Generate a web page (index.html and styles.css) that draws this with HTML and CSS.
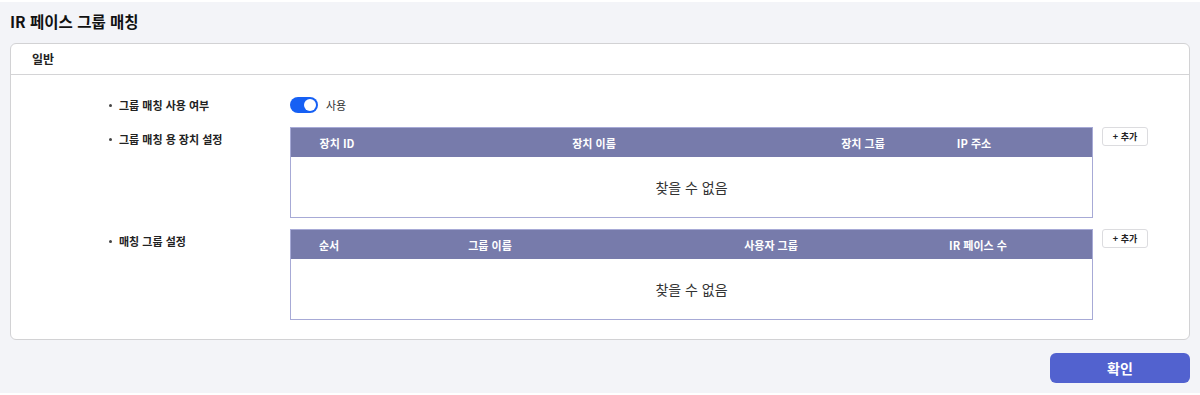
FILE: index.html
```html
<!DOCTYPE html>
<html lang="ko">
<head>
<meta charset="utf-8">
<title>IR 페이스 그룹 매칭</title>
<link rel="stylesheet" href="styles.css">
</head>
<body>
<div class="page">
  <h1 class="title">IR 페이스 그룹 매칭</h1>
  <section class="card">
    <div class="card-head">일반</div>
    <div class="card-body">
      <div class="row row-toggle">
        <div class="label"><span class="dot"></span>그룹 매칭 사용 여부</div>
        <div class="content toggle-wrap">
          <span class="toggle"><span class="knob"></span></span>
          <span class="toggle-text">사용</span>
        </div>
      </div>
      <div class="row">
        <div class="label"><span class="dot"></span>그룹 매칭 용 장치 설정</div>
        <div class="table">
          <div class="thead cols-device">
            <span>장치 ID</span><span>장치 이름</span><span>장치 그룹</span><span>IP 주소</span><span></span>
          </div>
          <div class="tbody">찾을 수 없음</div>
        </div>
        <button class="add-btn">+ 추가</button>
      </div>
      <div class="row">
        <div class="label"><span class="dot"></span>매칭 그룹 설정</div>
        <div class="table">
          <div class="thead cols-group">
            <span>순서</span><span>그룹 이름</span><span>사용자 그룹</span><span>IR 페이스 수</span><span></span>
          </div>
          <div class="tbody">찾을 수 없음</div>
        </div>
        <button class="add-btn">+ 추가</button>
      </div>
    </div>
  </section>
  <div class="footer">
    <button class="confirm">확인</button>
  </div>
</div>
</body>
</html>
```

FILE: styles.css
```css
* { box-sizing: border-box; }
html, body {
  margin: 0;
  padding: 0;
  background: #ffffff;
  font-family: "Noto Sans CJK KR", "Noto Sans", sans-serif;
  color: #222;
}
.page {
  margin-top: 2px;
  height: 391px;
  background: #f3f4f8;
  padding: 0 10px;
}
.title {
  margin: 0;
  padding: 9px 0 12px;
  font-size: 15.5px;
  line-height: 20px;
  font-weight: 700;
  color: #111;
}
.card {
  background: #fff;
  border: 1px solid #d2d2d4;
  border-radius: 6px;
  height: 297px;
}
.card-head {
  height: 31px;
  border-bottom: 1px solid #d4d4d6;
  padding-left: 21px;
  font-size: 12px;
  font-weight: 700;
  line-height: 30px;
  color: #222;
}
.card-body {
  padding: 22px 0 0 97px;
  display: flex;
  flex-direction: column;
  gap: 11px;
}
.row {
  display: grid;
  grid-template-columns: 182px 803px 55px;
  align-items: start;
}
.row-toggle {
  margin-bottom: 3px;
}
.label {
  display: flex;
  align-items: center;
  font-size: 11px;
  font-weight: 700;
  line-height: 16px;
  color: #222;
  margin-top: 4px;
}
.row-toggle .label { margin-top: 0; }
.dot {
  width: 3px;
  height: 3px;
  border-radius: 50%;
  background: #444;
  margin: 0 7px 0 1px;
}
.toggle-wrap {
  display: flex;
  align-items: center;
  height: 16px;
}
.toggle {
  width: 28px;
  height: 16px;
  border-radius: 8px;
  background: #1660f4;
  display: flex;
  align-items: center;
  justify-content: flex-end;
  padding: 0 2px;
}
.knob {
  width: 12px;
  height: 12px;
  border-radius: 50%;
  background: #fff;
}
.toggle-text {
  margin-left: 8px;
  font-size: 11px;
  color: #333;
}
.table {
  border: 1px solid #a7aad6;
}
.thead {
  display: grid;
  height: 29px;
  background: #777bab;
  color: #fff;
  font-size: 11px;
  font-weight: 700;
  align-items: center;
  text-align: center;
}
.cols-device { grid-template-columns: 92px 422px 116px 106px 1fr; }
.cols-group { grid-template-columns: 76px 246px 316px 98px 1fr; }
.tbody {
  height: 60px;
  display: flex;
  align-items: center;
  justify-content: center;
  font-size: 14px;
  color: #333;
}
.add-btn {
  margin-left: 9px;
  height: 19px;
  width: 46px;
  padding: 0;
  border: 1px solid #dcdcdf;
  border-radius: 3px;
  background: #fff;
  font-family: inherit;
  font-size: 9px;
  font-weight: 700;
  color: #222;
  line-height: 17px;
}
.footer {
  display: flex;
  justify-content: flex-end;
  margin-top: 13px;
}
.confirm {
  width: 140px;
  height: 30px;
  border: none;
  border-radius: 6px;
  background: #5262cf;
  color: #fff;
  font-family: inherit;
  font-size: 14px;
  font-weight: 700;
}
```
